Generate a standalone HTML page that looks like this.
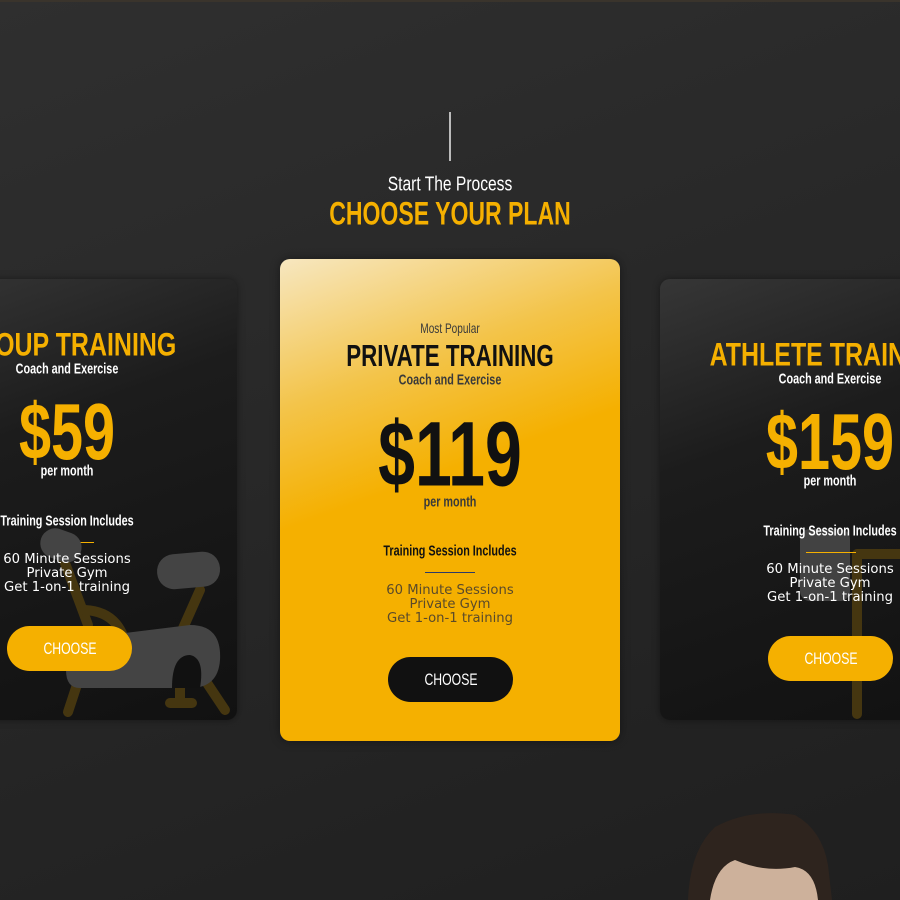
<!DOCTYPE html>
<html><head><meta charset="utf-8"><style>
*{margin:0;padding:0;box-sizing:border-box}
body{width:900px;height:900px;overflow:hidden;position:relative;background:linear-gradient(160deg,#2f2f2f 0%,#272727 50%,#1f1f1f 100%);font-family:"Liberation Sans",sans-serif}
.a{position:absolute}
.t{position:absolute;left:50%;white-space:nowrap;font-weight:bold;transform:translate(-50%,-50%) scaleX(.72)}
.w{transform:translate(-50%,-50%) scaleX(.78)}
.card{position:absolute;width:340px;border-radius:10px;overflow:hidden}
.dark{background:linear-gradient(160deg,#363636 0%,#1c1c1c 35%,#111 100%);box-shadow:0 0 8px rgba(0,0,0,.4)}
.list{position:absolute;left:0;width:340px;text-align:center;font-family:"DejaVu Sans",sans-serif;font-size:13.2px;line-height:14px;transform:translateY(-50%)}
.btn{position:absolute;width:125px;height:45px;border-radius:23px}
.btn span{position:absolute;left:50%;top:50%;transform:translate(-50%,-50%) scaleX(.72);font-size:17px;white-space:nowrap}
</style></head><body>
<div class="a" style="left:0;top:0;width:900px;height:2px;background:#3a342c"></div>
<div class="a" style="left:449px;top:112px;width:2px;height:49px;background:#bbb"></div>
<div class="t w" style="top:185px;font-size:20px;color:#fff;font-weight:normal">Start The Process</div>
<div class="t" style="top:214px;font-size:32px;color:#f5b000">CHOOSE YOUR PLAN</div>

<!-- left card -->
<div class="card dark" style="left:-103px;top:279px;height:441px">
<div class="t w" style="top:66px;font-size:32px;color:#f5b000">GROUP TRAINING</div>
<div class="t" style="top:90px;font-size:15px;color:#fff">Coach and Exercise</div>
<div class="t" style="top:153px;font-size:80px;color:#f5b000">$59</div>
<div class="t" style="top:192px;font-size:15px;color:#fff">per month</div>
<div class="t" style="top:242px;font-size:15px;color:#fff">Training Session Includes</div>
<div class="a" style="left:147px;top:263px;width:50px;height:1px;background:#f5b000"></div>
</div>
<svg class="a" style="left:0;top:0" width="237" height="720" viewBox="0 0 237 720">
<g stroke="#453610" stroke-width="10" stroke-linecap="round" fill="none">
<path d="M62 555 L88 625"/><path d="M85 610 Q125 612 128 660"/><path d="M200 590 L180 635"/><path d="M90 645 L68 712"/><path d="M205 680 L225 710"/><path d="M180 668 L180 700 M170 703 L192 703"/>
</g>
<rect x="40" y="530" width="42" height="30" rx="15" fill="#444" transform="rotate(20 60 545)"/>
<rect x="157" y="553" width="63" height="35" rx="17" fill="#444" transform="rotate(-5 188 570)"/>
<path d="M68 640 L190 625 Q222 625 220 660 Q218 688 190 688 L80 688 Q66 688 66 670 Z" fill="#444"/>
<path d="M172 688 Q172 655 190 655 Q205 658 200 688 Z" fill="#111"/>
</svg>
<div class="list" style="left:-103px;top:574px;color:#fff">60 Minute Sessions<br>Private Gym<br>Get 1-on-1 training</div>
<div class="btn" style="left:7px;top:626px;background:#f5b000;color:#fff"><span>CHOOSE</span></div>

<!-- right card -->
<div class="card dark" style="left:660px;top:279px;height:441px">
<svg class="a" style="left:140px;top:250px" width="200" height="190">
<rect x="0" y="0" width="50" height="72" rx="10" fill="#424242"/>
<path d="M57 25 L57 185 M57 25 L200 25" stroke="#453610" stroke-width="10" stroke-linecap="round" fill="none"/>
</svg>
<div class="t w" style="top:76px;font-size:32px;color:#f5b000">ATHLETE TRAINING</div>
<div class="t" style="top:100px;font-size:15px;color:#fff">Coach and Exercise</div>
<div class="t" style="top:163px;font-size:80px;color:#f5b000">$159</div>
<div class="t" style="top:202px;font-size:15px;color:#fff">per month</div>
<div class="t" style="top:252px;font-size:15px;color:#fff">Training Session Includes</div>
<div class="a" style="left:146px;top:273px;width:50px;height:1px;background:#f5b000"></div>
<div class="list" style="top:305px;color:#fff">60 Minute Sessions<br>Private Gym<br>Get 1-on-1 training</div>
<div class="btn" style="left:108px;top:357px;background:#f5b000;color:#fff"><span>CHOOSE</span></div>
</div>

<!-- middle card -->
<div class="card" style="left:280px;top:259px;height:482px;background:linear-gradient(160deg,#f7e7c0 0%,#f3c44a 25%,#f5b000 45%,#f5b000 100%);box-shadow:0 0 10px rgba(0,0,0,.4)">
<div class="t" style="top:69px;font-size:14px;color:#3a3a3a;font-weight:normal">Most Popular</div>
<div class="t" style="top:97px;font-size:31px;color:#111">PRIVATE TRAINING</div>
<div class="t" style="top:121px;font-size:15px;color:#3a3a3a">Coach and Exercise</div>
<div class="t" style="top:196px;font-size:92px;color:#111">$119</div>
<div class="t" style="top:243px;font-size:15px;color:#3a3a3a">per month</div>
<div class="t" style="top:292px;font-size:15px;color:#111">Training Session Includes</div>
<div class="a" style="left:145px;top:313px;width:50px;height:1px;background:#2a3a6a"></div>
<div class="list" style="top:346px;color:#5a4a2a">60 Minute Sessions<br>Private Gym<br>Get 1-on-1 training</div>
<div class="btn" style="left:108px;top:398px;background:#111;color:#fff"><span>CHOOSE</span></div>
</div>

<!-- head -->
<svg class="a" style="left:680px;top:805px" width="160" height="95">
<path d="M8 95 Q10 45 35 22 Q70 3 115 10 Q142 25 148 60 L152 95 Z" fill="#2e241e"/>
<path d="M30 95 Q35 62 55 55 Q85 68 115 62 Q135 65 138 95 Z" fill="#cdb19b"/>
</svg>
</body></html>
